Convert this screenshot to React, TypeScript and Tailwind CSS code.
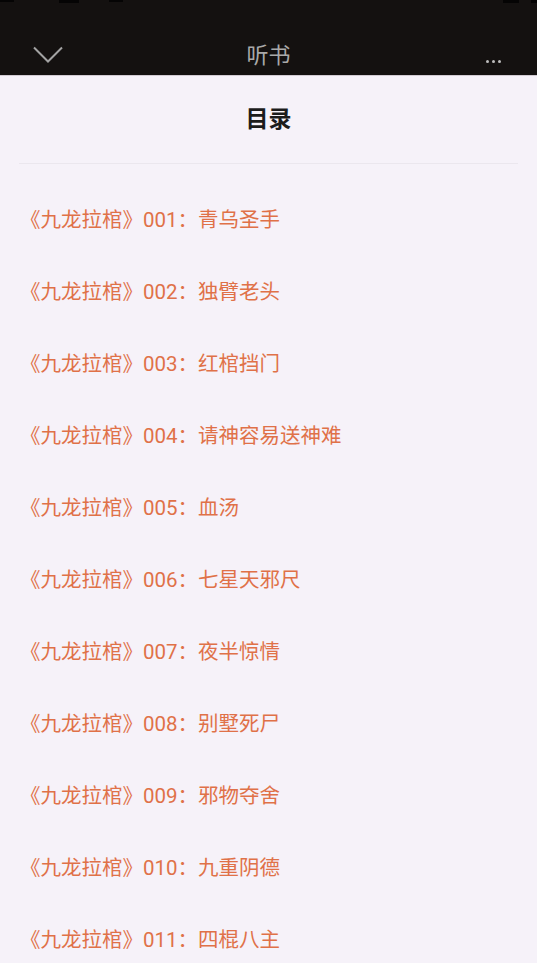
const chapters = [
  "青乌圣手",
  "独臂老头",
  "红棺挡门",
  "请神容易送神难",
  "血汤",
  "七星天邪尺",
  "夜半惊情",
  "别墅死尸",
  "邪物夺舍",
  "九重阴德",
  "四棍八主",
];

function pad(n: number) {
  return String(n).padStart(3, "0");
}

export default function App() {
  return (
    <div
      className="w-[537px] h-[963px] overflow-hidden bg-[#141110] flex flex-col"
      style={{ fontFamily: '"Noto Sans CJK SC", "Noto Sans", sans-serif' }}
    >
      {/* top bar */}
      <div className="h-[75px] shrink-0 relative flex items-end">
        <div className="absolute top-0 left-0 right-0 h-[4px] flex items-start">
          <div className="w-[14px] h-[2px] bg-[#050404]" />
          <div className="w-[20px] h-[3px] bg-[#050404] ml-[45px]" />
          <div className="w-[14px] h-[2px] bg-[#050404] ml-[30px]" />
          <div className="flex-1" />
          <div className="w-[16px] h-[3px] bg-[#050404] mr-[12px]" />
          <div className="w-[6px] h-[3px] bg-[#050404]" />
        </div>
        <div className="w-full h-[40px] flex items-center px-[33px]">
          <div className="w-[30px] flex items-center">
            <svg width="30" height="18" viewBox="0 0 30 18" fill="none">
              <path d="M1 1.5 L15 15.5 L29 1.5" stroke="#a3a3a3" strokeWidth="2" />
            </svg>
          </div>
          <div className="flex-1 flex justify-center -mt-[4px]">
            <span className="text-[22px] text-[#a9a9a9] leading-none">听书</span>
          </div>
          <div className="w-[30px] flex justify-end items-center mt-[12px]">
            <div className="flex gap-[3px] items-center mr-[3px]">
              <span className="w-[3px] h-[3px] rounded-full bg-[#bdbdbd]" />
              <span className="w-[3px] h-[3px] rounded-full bg-[#bdbdbd]" />
              <span className="w-[3px] h-[3px] rounded-full bg-[#bdbdbd]" />
            </div>
          </div>
        </div>
      </div>

      {/* sheet */}
      <div className="flex-1 bg-[#f6f2f9] border-t border-[#d2cbd2] flex flex-col">
        <div className="h-[88px] mx-[19px] pb-[5px] border-b border-[#ebe7ee] flex items-center justify-center">
          <span className="text-[23px] font-bold text-[#1c1c1c] leading-none">目录</span>
        </div>
        <div className="pt-[20px] flex flex-col">
          {chapters.map((c, i) => (
            <div key={i} className="h-[72px] shrink-0 flex items-center px-[20px]">
              <span
                className="text-[20.5px] text-[#e07148] leading-none"
                style={{ fontFamily: 'Roboto, "Noto Sans CJK SC", sans-serif' }}
              >
                《九龙拉棺》{pad(i + 1)}：{c}
              </span>
            </div>
          ))}
        </div>
      </div>
    </div>
  );
}
